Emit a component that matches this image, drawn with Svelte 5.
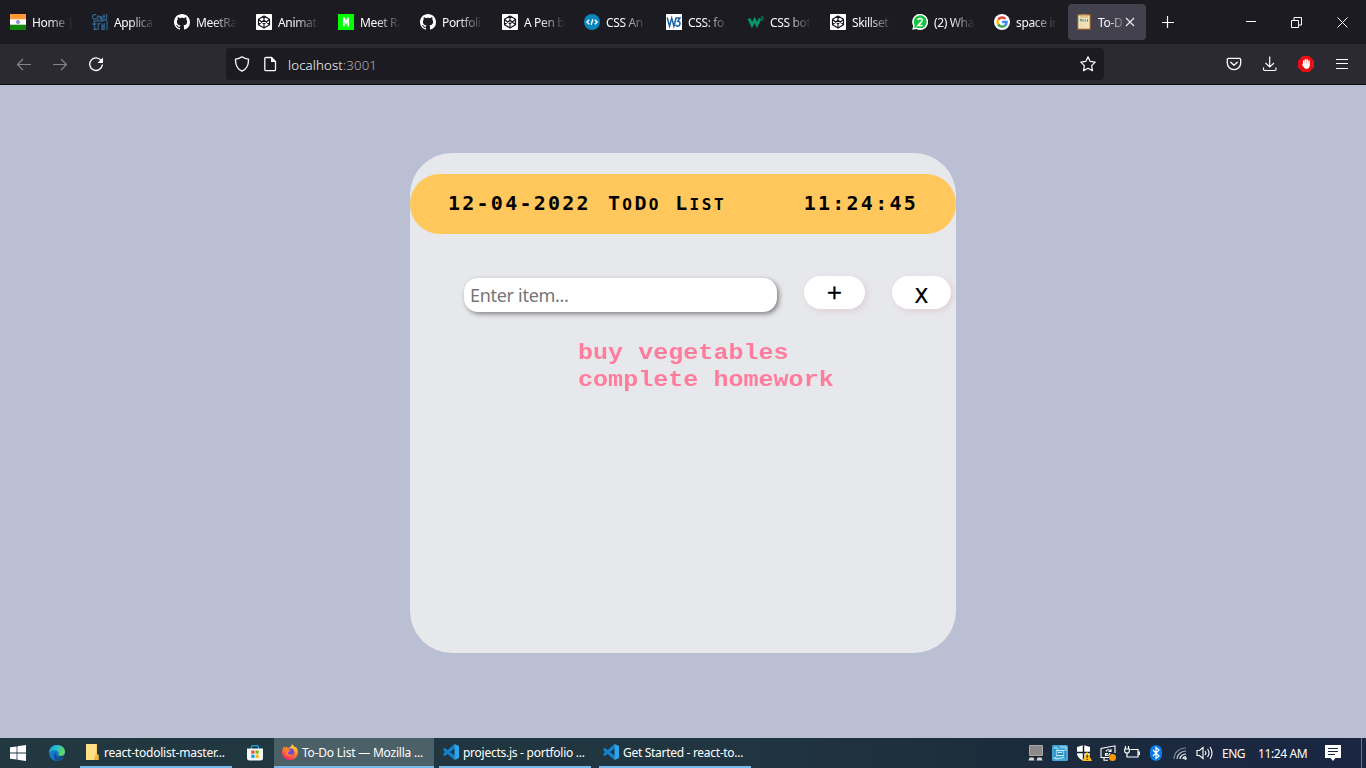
<script>
  const tabs = [
    { icon: 'india', title: 'Home |' },
    { icon: 'credly', title: 'Applica' },
    { icon: 'github', title: 'MeetRa' },
    { icon: 'codepen', title: 'Animat' },
    { icon: 'meet', title: 'Meet Ra' },
    { icon: 'github', title: 'Portfoli' },
    { icon: 'codepen', title: 'A Pen b' },
    { icon: 'code', title: 'CSS An' },
    { icon: 'w3blue', title: 'CSS: fo' },
    { icon: 'w3green', title: 'CSS bot' },
    { icon: 'codepen', title: 'Skillset' },
    { icon: 'whatsapp', title: '(2) Wha' },
    { icon: 'google', title: 'space in' },
    { icon: 'todo', title: 'To-D', active: true }
  ];
  const items = ['buy vegetables', 'complete homework'];
</script>

{#snippet favicon(name)}
  <svg class="fav" viewBox="0 0 16 16">
    {#if name === 'india'}
      <rect width="16" height="16" fill="#fff" /><rect width="16" height="5.3" fill="#ff9933" /><rect y="10.7" width="16" height="5.3" fill="#138808" />
      <circle cx="8" cy="8" r="1.7" fill="#9a9ad6" stroke="#6666b5" stroke-width=".5" />
    {:else if name === 'credly'}
      <g fill="none" stroke="#30618a" stroke-width="1.3">
        <path d="M4 .7C1 0 0 2 .8 4s2.700 1.500 3.400 0M5.500 6V2l2 .500M8 4h2c0-2.300-2.300-2-2 0s2 2 2.500.5M12 0v5.500M14.500 0v6M11 2.500h2M1 7c3 1 4-1 6 0s5-2 8-.5M2.500 7.500V14l1.500 1M0 10h4.500M6.200 9v7M6.200 10.500c1-1 2-1 2.500-.5M10 9.500V16M12.200 9v7c-2 0-2.500-4-.3-4.500M15 7v9M1 15.500h4M10 8V7" />
      </g>
    {:else if name === 'github'}
      <path fill="#fff" d="M8 0C3.58 0 0 3.58 0 8c0 3.54 2.29 6.53 5.47 7.59.4.07.55-.17.55-.38 0-.19-.01-.82-.01-1.49-2.01.37-2.53-.49-2.69-.94-.09-.23-.48-.94-.82-1.13-.28-.15-.68-.52-.01-.53.63-.01 1.08.58 1.23.82.72 1.21 1.87.87 2.33.66.07-.52.28-.87.51-1.07-1.78-.2-3.64-.89-3.64-3.95 0-.87.31-1.59.82-2.15-.08-.2-.36-1.02.08-2.12 0 0 .67-.21 2.2.82.64-.18 1.32-.27 2-.27s1.36.09 2 .27c1.53-1.04 2.2-.82 2.2-.82.44 1.1.16 1.92.08 2.12.51.56.82 1.27.82 2.15 0 3.07-1.87 3.75-3.65 3.95.29.25.54.73.54 1.48 0 1.07-.01 1.93-.01 2.2 0 .21.15.46.55.38A8.01 8.01 0 0 0 16 8c0-4.42-3.58-8-8-8z" />
    {:else if name === 'codepen'}
      <rect width="16" height="16" rx=".8" fill="#fff" />
      <path d="M8 2 13.500 5.300v5.400L8 14 2.500 10.700V5.300zM2.500 5.500 8 9.700l5.500-4.200M2.500 10.500 8 6.300l5.500 4.200M8 2v4.300M8 9.700V14" fill="none" stroke="#15161a" stroke-width="1.200" stroke-linejoin="round" />
    {:else if name === 'meet'}
      <rect width="16" height="16" rx=".6" fill="#00ff00" /><path d="M5.800 12.500v-9L8 9l2.200-5.500v9" fill="none" stroke="#fff" stroke-width="1.700" />
    {:else if name === 'code'}
      <circle cx="8" cy="8" r="8" fill="#0a87bb" /><path d="M5.200 5.700 2.900 8l2.300 2.300M10.800 5.700 13.100 8l-2.300 2.300M8.900 5.300 7.100 10.700" fill="none" stroke="#fff" stroke-width="1.400" />
    {:else if name === 'w3blue'}
      <rect width="16" height="16" rx=".6" fill="#fff" /><path d="m1.200 3.500 2.300 8.600L5.700 4l2.200 8.100 2.300-8.600M10 4h4l-2.200 3.200c3.300.1 2.600 5.100-.2 5-1 0-1.700-.5-2-1.400" fill="none" stroke="#1960a4" stroke-width="1.500" />
    {:else if name === 'w3green'}
      <path d="m1 4.500 3 6.500 2.700-5L9 11l3-6.500" fill="none" stroke="#079764" stroke-width="2.800" /><path d="M12.800 3h2.400L14 4.500c2 0 1.700 2.400-.9 1.600" fill="none" stroke="#079764" stroke-width=".9" />
    {:else if name === 'whatsapp'}
      <path d="M.2 15.800 1.300 12A8 8 0 1 1 4.500 15z" fill="#fff" /><circle cx="8.200" cy="7.800" r="6.500" fill="#14c143" /><path d="M2 14 3 10l3 3z" fill="#14c143" /><path d="M5.800 6.200c.5-2.500 4.700-2.100 4.400.2-.1 1.400-2.400 2.900-4.200 5h4.500" fill="none" stroke="#fff" stroke-width="1.500" />
    {:else if name === 'google'}
      <circle cx="8" cy="8" r="8" fill="#fff" /><g fill="none" stroke-width="2.400"><path d="M4.200 5.700A4.600 4.600 0 0 1 11.400 4.800" stroke="#ea4335" /><path d="M4.200 5.700a4.600 4.600 0 0 0 0 4.800" stroke="#fbbc05" /><path d="M4.200 10.500a4.600 4.600 0 0 0 6.900 1" stroke="#34a853" /><path d="M8.100 8h4.500c0 1.600-.5 2.700-1.500 3.500" stroke="#4285f4" /></g>
    {:else}
      <rect x="1.700" y=".7" width="12.600" height="14.600" fill="#f6e7be" stroke="#8b5a2e" stroke-width="1.300" /><path d="M5 1h6M4 3h8" stroke="#cda56a" /><path d="M3.700 5.500H6M5 5.500v2.300M7 5.200v2.600M9.200 5.200v2.600M11.500 5.200v2.600" stroke="#4d8d9a" stroke-width="1.100" /><path d="M4 10h8M4 12.500h8M5.500 9v5" stroke="#e3d3a5" stroke-width=".8" />
    {/if}
  </svg>
{/snippet}

{#snippet vscode()}
  <svg class="fav" viewBox="0 0 16 16"><path d="M11.500 0v4.500L2 12 .3 11.200v-1.500L11.500 0zM.3 4.800 2 4l9.500 7.500V16L.3 6.300z" fill="#1481cb" /><path d="M11.500 0 16 2v12l-4.500 2z" fill="#2ba7f2" /></svg>
{/snippet}

<div class="screen">
  <div class="tabbar">
    {#each tabs as tab}
      <div class="tab" class:active={tab.active}>
        {@render favicon(tab.icon)}
        <span class="title">{tab.title}</span>
        {#if tab.active}
          <svg class="close" viewBox="0 0 10 10"><path d="m1 1 8 8M9 1 1 9" stroke="#eee" stroke-width="1.100" /></svg>
        {/if}
      </div>
    {/each}
    <svg class="plus" width="12" height="12" viewBox="0 0 12 12"><path d="M5.500 0v12M0 6.500h12" stroke="#fff" stroke-width="1.200" /></svg>
    <div class="controls">
      <svg width="10" height="10"><path d="M0 4.500h10" stroke="#fff" /></svg>
      <svg width="11" height="11"><path d="M.5 3.500h7v7h-7zM3 3V.5h7.500V8H8" fill="none" stroke="#fff" /></svg>
      <svg width="11" height="11"><path d="m.5.5 10 10M10.500.5l-10 10" stroke="#fff" /></svg>
    </div>
  </div>

  <div class="navbar">
    <div class="navleft">
      <svg width="16" height="16" viewBox="0 0 16 16"><path d="M15 8.500H1.500M7 3 1.500 8.500 7 14" fill="none" stroke="#85848c" stroke-width="1.200" /></svg>
      <svg width="16" height="16" viewBox="0 0 16 16"><path d="M1 8.500h13.500M9 3l5.500 5.500L9 14" fill="none" stroke="#85848c" stroke-width="1.200" /></svg>
      <svg width="16" height="16" viewBox="0 0 16 16"><path d="M13.300 4.700A6.300 6.300 0 1 0 14.300 9" fill="none" stroke="#fbfbfe" stroke-width="1.400" stroke-linecap="round" /><path d="M15 1.500V7H9.500z" fill="#fbfbfe" /></svg>
    </div>
    <div class="url">
      <svg width="16" height="16" viewBox="0 0 16 16"><path d="M8 .8c2 1.500 4 2.200 6.500 2.400.2 6-1.700 9.700-6.500 12-4.800-2.300-6.700-6-6.500-12C4 3 6 2.300 8 .8z" fill="none" stroke="#fbfbfe" stroke-width="1.300" stroke-linejoin="round" /></svg>
      <svg width="16" height="16" viewBox="0 0 16 16"><path d="M4 1.500h5.500l4 4v8q0 1.200-1.200 1.200H4q-1.200 0-1.200-1.200V2.700Q2.800 1.500 4 1.500z" fill="none" stroke="#fbfbfe" stroke-width="1.300" /><path d="M9 1v5h5z" fill="#fbfbfe" /></svg>
      <span class="address">localhost<i>:3001</i></span>
      <svg class="star" width="16" height="16" viewBox="0 0 16 16"><path d="m8 .8 2.200 4.600 5 .7-3.600 3.500.9 5-4.500-2.400-4.500 2.400.9-5L.8 6.100l5-.7z" fill="none" stroke="#fbfbfe" stroke-width="1.200" stroke-linejoin="round" /></svg>
    </div>
    <div class="navright">
      <svg width="16" height="16" viewBox="0 0 16 16"><path d="M2.500 2.300h11q1.200 0 1.200 1.200V7a6.700 6.700 0 0 1-13.400 0V3.500q0-1.200 1.200-1.200zM4.700 6.300 8 9.300l3.300-3" fill="none" stroke="#fbfbfe" stroke-width="1.300" stroke-linecap="round" stroke-linejoin="round" /></svg>
      <svg width="16" height="16" viewBox="0 0 16 16"><path d="M7.700.5v10.500M3.500 7l4.200 4L12 7M1.500 11.500v1.800q0 1.200 1.200 1.200h10.100q1.200 0 1.200-1.200v-1.800" fill="none" stroke="#fbfbfe" stroke-width="1.200" /></svg>
      <svg width="16" height="16" viewBox="0 0 16 16"><path d="M4.700 0h6.600L16 4.700v6.600L11.300 16H4.700L0 11.300V4.700z" fill="#e90e12" /><path d="M5.700 9V5M7.400 8V3.700M9.200 8V3.700M11 9V5" stroke="#fff" stroke-width="1.500" stroke-linecap="round" /><path d="M5 7.500h6.700v2.800Q11 13 8.700 13 6.700 13 5.700 11L4 8.700z" fill="#fff" /></svg>
      <svg width="16" height="16" viewBox="0 0 16 16"><path d="M2 3.500h12M2 7.500h12M2 12.500h12" stroke="#fbfbfe" stroke-width="1.200" /></svg>
    </div>
  </div>

  <main>
    <section class="card">
      <header>
        <span class="date">12-04-2022</span>
        <h1>T<small>o</small>D<small>o</small> L<small>ist</small></h1>
        <time>11:24:45</time>
      </header>
      <div class="entry">
        <input placeholder="Enter item..." />
        <button class="add">+</button>
        <button class="clear">x</button>
      </div>
      <ul>
        {#each items as item}<li>{item}</li>{/each}
      </ul>
    </section>
  </main>

  <footer>
    <div class="start"><svg width="16" height="16" viewBox="0 0 16 16"><path d="M0 2.300 6.600 1.400v6.200H0zM7.400 1.300 16 0v7.600H7.400zM0 8.400h6.600v6.200L0 13.700zM7.400 8.400H16V16l-8.600-1.300z" fill="#fff" /></svg></div>
    <div class="edge"><svg width="16" height="16" viewBox="0 0 16 16">
      <defs><linearGradient id="eg" x1="0" y1="0" x2="1" y2=".3"><stop offset="0" stop-color="#159bd9" /><stop offset=".5" stop-color="#2abfd0" /><stop offset="1" stop-color="#61d957" /></linearGradient></defs>
      <circle cx="8" cy="8" r="8" fill="#1379c8" /><path d="M0 8C0 3 3.500 0 8 0c5 0 8 3.300 8 6.800 0 2.700-2 4-4.300 4-2 0-2.700-.7-2.100-1.600C10.800 7 8 4.800 5 5.200 2.500 5.500.5 6.500 0 8z" fill="url(#eg)" /><path d="M7.600 7.200c-2 3.500 1.800 6.700 7 4.700-1.500 2.700-4.500 4.200-7.200 4-3.500-2.200-3.400-7.200.2-8.700z" fill="#135099" /><path d="M9.500 9.200c-1 1.800 1.700 2.600 4.800 1.700l1.700-1.400v2l-1.400.7c-4 1-6.400-.8-5.100-3z" fill="#203840" />
    </svg></div>
    <div class="task t1">
      <svg class="fav" viewBox="0 0 16 16"><path d="M2 0h11v10.500h1.500V16H2z" fill="#f7cf61" /><path d="M2 0h10v16H2z" fill="#ffdf85" /><path d="M11 11h3.500v5H10z" fill="#e9b83e" /></svg>
      <span>react-todolist-master...</span>
    </div>
    <div class="store"><svg width="16" height="16" viewBox="0 0 16 16"><path d="M4.500 4V2Q4.500.7 6 .7h4q1.500 0 1.500 1.300v2" fill="none" stroke="#22a7e5" stroke-width="1.300" /><path d="M0 3.500h16V13q0 2.500-2.500 2.500h-11Q0 15.500 0 13z" fill="#f4f6f8" /><path d="M4.300 5.500h3.200v3.200H4.300z" fill="#f25022" /><path d="M8.500 5.500h3.200v3.200H8.500z" fill="#7fba00" /><path d="M4.300 9.700h3.200v3.200H4.300z" fill="#00a4ef" /><path d="M8.500 9.700h3.200v3.200H8.500z" fill="#ffb900" /></svg></div>
    <div class="task t2">
      <svg class="fav" viewBox="0 0 16 16">
        <defs><linearGradient id="ff" x1=".8" y1="0" x2=".3" y2="1"><stop offset="0" stop-color="#ffe83b" /><stop offset=".45" stop-color="#ff8a22" /><stop offset="1" stop-color="#f5216c" /></linearGradient></defs>
        <path d="M10 0c1 1.300 2.200 2 3 3.500l.7-.8C15.500 5 16 6.700 16 8.500A7.700 7.700 0 0 1 8 16 7.700 7.700 0 0 1 0 8.500C0 6 1 4 2.200 2.300L3 4l2-1.500.5 1.700C7.500 4 9.500 2.500 10 0z" fill="url(#ff)" /><circle cx="8.500" cy="8.200" r="3.700" fill="#7547db" /><path d="M3.500 6c2-1.500 3.500-.7 5 .3-.5 1.500-2.500 1.200-2.500 2.700 0 2 3.500 2.300 5 .5-.5 4-7 3.500-7.500-.5z" fill="#ff8127" />
      </svg>
      <span>To-Do List — Mozilla ...</span>
    </div>
    <div class="task t3">{@render vscode()}<span>projects.js - portfolio ...</span></div>
    <div class="task t4">{@render vscode()}<span>Get Started - react-to...</span></div>
    <div class="tray">
      <svg width="16" height="16" viewBox="0 0 16 16"><path d="M1.500.5h13v10h-13z" fill="#8a8a8a" stroke="#a7a7a7" /><path d="M1.500 12.500h4l1 3H.5zM9.500 12.500h4l1 3h-6z" fill="#d6d6d6" /><path d="M0 11.500h16" stroke="#222" /></svg>
      <svg width="16" height="16" viewBox="0 0 16 16"><rect width="16" height="16" rx="1.500" fill="#3fa7d9" /><path d="M2 3h3l1 1.500M4 5.500h8v5H4zM6 7.500h4M2 12l4 2 7-2M8 2h6v4M2 13l3 1" fill="none" stroke="#c2e6ef" stroke-width="1" /><path d="M3 4v8M6 9h5M13 6v7" stroke="#0966a4" stroke-width=".8" /></svg>
      <svg width="16" height="16" viewBox="0 0 16 16"><path d="M7.500 0 14 2v6c0 4-3 6-6.500 8C4 14 1 12 1 8V2z" fill="#fff" /><path d="M7.500 0v16M1 7.500h13" stroke="#17232f" stroke-width="1.500" /><path d="M11 6.500 16 16H6.300z" fill="#ffbd18" /><path d="M11.200 10v3M11.200 14v1" stroke="#3b3000" stroke-width="1.200" /></svg>
      <svg width="16" height="16" viewBox="0 0 16 16"><path d="M9 12.500H1v-9L15 .8V8M4 12.500v2.700h4M6 6.500c.5-2 3.500-2.500 4.500-.5M11 4v2.500H8.500M10 8c-.5 2.500-3 3-4.500 1.500M5.500 11V8.500H8" fill="none" stroke="#fff" stroke-width="1.100" /><circle cx="12.500" cy="12.500" r="3.500" fill="#ff9800" /></svg>
      <svg width="16" height="16" viewBox="0 0 16 16"><path d="M6.500 4.500H14v7.500H4.500M14 7h1.500v2.500H14M1.500 1v3M4.500 1v3M.7 4h4.600v2Q5.300 8 3 8 .7 8 .7 6zM3 8v4h2" fill="none" stroke="#fff" stroke-width="1.200" /></svg>
      <svg width="16" height="16" viewBox="0 0 16 16"><rect x="2" width="12" height="16" rx="6" fill="#087ae5" /><path d="m5 5 6 6-3 2.500v-11L11 5l-6 6" fill="none" stroke="#fff" stroke-width="1.200" /></svg>
      <svg class="wifi" width="16" height="16" viewBox="0 0 16 16"><g fill="none" stroke-width="1.200"><path d="M1 14C1 8 6 3 13 3" stroke="#7e8794" /><path d="M4 14C4 10 8 6 13 6" stroke="#b9bec6" /><path d="M7 14c0-3 3-5 6-5M10 14c0-1.500 1-2.500 3-2.500" stroke="#fff" /></g><circle cx="12.500" cy="13.500" r="1.300" fill="#fff" /></svg>
      <svg class="sound" width="18" height="16" viewBox="0 0 18 16"><path d="M1 5.500h2.500L7 2.500v11l-3.500-3H1zM9 6q1.700 2 0 4M11.500 4q3 4 0 8M14 2q4 6 0 12" fill="none" stroke="#fff" stroke-width="1.100" /></svg>
    </div>
    <span class="lang">ENG</span>
    <span class="clock">11:24 AM</span>
    <svg class="note" width="16" height="16" viewBox="0 0 16 16"><path d="M0 0h16v13H10.500L8 16l-2.500-3H0z" fill="#fff" /><path d="M3 3.500h10M3 6.500h10M3 9.500h7" stroke="#1b2740" stroke-width="1.100" /></svg>
    <div class="peek"></div>
  </footer>
</div>

<style>
  :global(body) { margin: 0; overflow: hidden; }
  .screen { width: 1366px; height: 768px; display: flex; flex-direction: column; font-family: 'Noto Sans', sans-serif; overflow: hidden; background: #babfd3; }
  svg { display: block; flex: none; }
  .fav { width: 16px; height: 16px; }

  .tabbar { height: 44px; flex: none; background: #1c1b22; display: flex; align-items: center; color: #fbfbfe; font-size: 12px; }
  .tab { box-sizing: border-box; width: 78px; height: 36px; margin: 0 2px; padding: 0 0 0 8px; display: flex; align-items: center; flex: none; border-radius: 4px; }
  .title { margin-left: 6px; width: 48px; white-space: nowrap; line-height: 18px; letter-spacing: -0.35px; padding-top: 1px; -webkit-mask-image: linear-gradient(to right, #000 16px, transparent 41px); mask-image: linear-gradient(to right, #000 16px, transparent 41px); }
  .active { background: #42414d; }
  .active .title { width: 25px; -webkit-mask-image: linear-gradient(to right, #000 10px, transparent 29px); mask-image: linear-gradient(to right, #000 10px, transparent 29px); }
  .close { width: 10px; height: 10px; margin-left: 2px; }
  .plus { margin-left: 14px; }
  .controls { margin-left: auto; display: flex; align-items: center; gap: 35px; padding-right: 18px; }

  .navbar { box-sizing: border-box; height: 41px; flex: none; background: #2b2a33; border-bottom: 1px solid #0c0c0d; display: flex; align-items: center; }
  .navleft { display: flex; gap: 20px; padding-left: 16px; width: 210px; }
  .url { box-sizing: border-box; width: 878px; height: 32px; border-radius: 4px; background: #1c1b22; display: flex; align-items: center; padding: 0 8px; }
  .url svg + svg { margin-left: 12px; }
  .address { margin-left: 10px; padding-top: 1px; font-size: 13.2px; font-weight: 300; letter-spacing: 0.15px; color: #fbfbfe; }
  .address i { font-style: normal; color: #b0afb6; }
  .url .star { margin-left: auto; }
  .navright { display: flex; gap: 20px; margin-left: auto; padding-right: 16px; }

  main { height: 653px; flex: none; display: flex; justify-content: center; align-items: flex-start; padding-top: 68px; box-sizing: border-box; }
  .card { box-sizing: border-box; width: 546px; height: 500px; padding-top: 21px; border-radius: 42px; background: #e7e8ec; }
  header { box-sizing: border-box; height: 60px; border-radius: 30px; background: #ffc75c; padding: 0 38px 2px 38px; display: flex; align-items: center; font: bold 20px 'DejaVu Sans Mono', monospace; letter-spacing: 2.25px; color: #000; }
  h1 { margin: 0 0 0 17px; font: inherit; white-space: pre; }
  small { font-size: 16px; text-transform: uppercase; letter-spacing: 2.6px; }
  time { margin-left: auto; }
  .entry { display: flex; align-items: flex-start; padding: 42px 5px 0 54px; }
  input { box-sizing: border-box; width: 313px; height: 34px; margin: 2px 27px 0 0; padding: 2px 6px; border: 0; border-radius: 14px; background: #fff; box-shadow: 2px 2px 5px #808080; font: 18px 'Noto Sans', sans-serif; letter-spacing: -0.3px; }
  input::placeholder { color: #757575; opacity: 1; }
  button { height: 33px; border: 0; padding: 0; border-radius: 17px; background: #fff; box-shadow: 2px 2px 6px #dccfd6; font: 27px/34px 'DejaVu Sans', sans-serif; color: #000; }
  .add { width: 61px; margin-right: 27px; font-size: 20px; line-height: 30px; padding-bottom: 2px; -webkit-text-stroke: 0.4px #000; }
  .clear { width: 59px; font-stretch: condensed; padding-top: 1px; }
  ul { list-style: none; margin: 28px 0 0 168px; padding: 0; }
  li { height: 27px; line-height: 27px; font-family: 'Liberation Mono', monospace; font-weight: bold; font-size: 25px; letter-spacing: 0.04px; color: #ff7c9c; transform: scaleY(0.88); }

  footer { height: 30px; flex: none; display: flex; align-items: center; background: linear-gradient(90deg, #213841, #20353f 55%, #1c2b3c 75%, #1a2642); color: #fff; font-size: 12px; }
  .start { width: 39px; padding-left: 10px; }
  .edge { width: 31px; }
  .task { box-sizing: border-box; height: 30px; border-bottom: 2px solid #76b9ed; display: flex; align-items: center; padding-left: 4px; white-space: nowrap; }
  .task span { margin-left: 4px; letter-spacing: -0.22px; padding-top: 1px; }
  .t1 { width: 152px; }
  .store { width: 27px; padding-left: 15px; }
  .t2 { width: 160px; padding-left: 8px; background: #4c6067; }
  .t3 { width: 152px; margin-left: 5px; }
  .t3 span { letter-spacing: -0.26px; }
  .t4 { width: 152px; margin-left: 8px; }
  .t4 span { letter-spacing: -0.3px; }
  .tray { margin-left: auto; display: flex; gap: 8px; }
  .sound { margin-left: -1px; }
  .wifi { margin-left: 1px; }
  .lang { margin-left: 8px; width: 36px; letter-spacing: -0.5px; }
  .clock { width: 67px; letter-spacing: -0.4px; }
  .note { margin-right: 20px; }
  .peek { width: 4px; height: 30px; border-left: 1px solid #6c7481; }
</style>
